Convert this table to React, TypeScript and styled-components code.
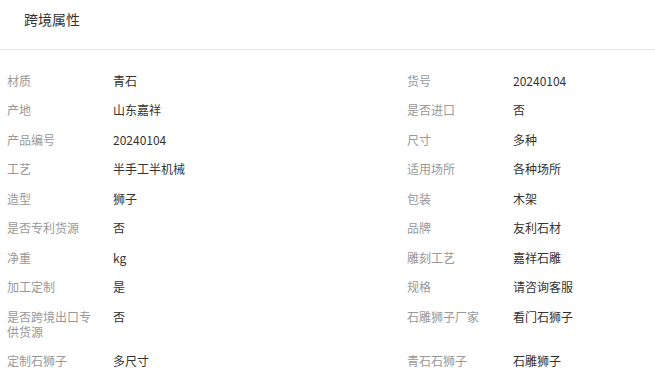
import React from 'react';
import styled, { createGlobalStyle } from 'styled-components';

const GlobalStyle = createGlobalStyle`
  body {
    margin: 0;
    background: #fff;
    font-family: 'Noto Sans CJK SC', 'Noto Sans', sans-serif;
    overflow: hidden;
  }
`;

const Panel = styled.div`
  width: 655px;
  overflow: hidden;
`;

const Header = styled.div`
  height: 50px;
  box-sizing: border-box;
  padding: 8px 24px 0;
  border-bottom: 1px solid #e8e8e8;
`;

const Title = styled.h3`
  margin: 0;
  font-size: 14px;
  line-height: 22px;
  font-weight: 400;
  color: #333;
`;

const Grid = styled.div`
  display: grid;
  grid-template-columns: 400px 400px;
  padding-top: 15.5px;
`;

const Item = styled.div`
  display: grid;
  grid-template-columns: 90px 1fr;
  column-gap: 16px;
  padding: 7.25px 0 7.25px 7px;
  font-size: 12px;
  line-height: 15px;
`;

const Label = styled.div`
  color: #999;
`;

const Value = styled.div`
  color: #333;
`;

const attrs: [string, string][] = [
  ['材质', '青石'],
  ['货号', '20240104'],
  ['产地', '山东嘉祥'],
  ['是否进口', '否'],
  ['产品编号', '20240104'],
  ['尺寸', '多种'],
  ['工艺', '半手工半机械'],
  ['适用场所', '各种场所'],
  ['造型', '狮子'],
  ['包装', '木架'],
  ['是否专利货源', '否'],
  ['品牌', '友利石材'],
  ['净重', 'kg'],
  ['雕刻工艺', '嘉祥石雕'],
  ['加工定制', '是'],
  ['规格', '请咨询客服'],
  ['是否跨境出口专供货源', '否'],
  ['石雕狮子厂家', '看门石狮子'],
  ['定制石狮子', '多尺寸'],
  ['青石石狮子', '石雕狮子'],
];

const App: React.FC = () => {
  return (
    <Panel>
      <GlobalStyle />
      <Header>
        <Title>跨境属性</Title>
      </Header>
      <Grid>
        {attrs.map(([label, value]) => (
          <Item key={label}>
            <Label>{label}</Label>
            <Value>{value}</Value>
          </Item>
        ))}
      </Grid>
    </Panel>
  );
};

export default App;
